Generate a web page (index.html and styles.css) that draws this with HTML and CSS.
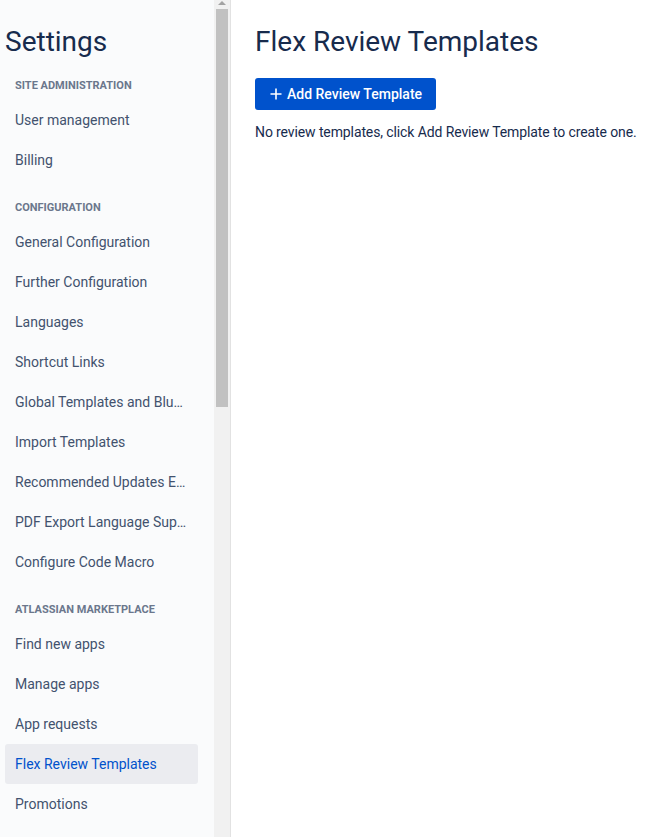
FILE: index.html
```html
<!DOCTYPE html>
<html lang="en">
<head>
<meta charset="utf-8">
<title>Flex Review Templates</title>
<link rel="stylesheet" href="styles.css">
</head>
<body>
<div class="layout">
  <aside class="sidebar">
    <nav class="nav">
      <h1 class="nav-title">Settings</h1>
      <div class="nav-heading">Site administration</div>
      <a class="nav-item">User management</a>
      <a class="nav-item">Billing</a>
      <div class="nav-heading">Configuration</div>
      <a class="nav-item">General Configuration</a>
      <a class="nav-item">Further Configuration</a>
      <a class="nav-item">Languages</a>
      <a class="nav-item">Shortcut Links</a>
      <a class="nav-item">Global Templates and Blueprints</a>
      <a class="nav-item">Import Templates</a>
      <a class="nav-item">Recommended Updates Email</a>
      <a class="nav-item">PDF Export Language Support</a>
      <a class="nav-item">Configure Code Macro</a>
      <div class="nav-heading">Atlassian Marketplace</div>
      <a class="nav-item">Find new apps</a>
      <a class="nav-item">Manage apps</a>
      <a class="nav-item">App requests</a>
      <a class="nav-item active">Flex Review Templates</a>
      <a class="nav-item">Promotions</a>
    </nav>
    <div class="scrollbar">
      <div class="scroll-arrow"></div>
      <div class="scroll-thumb"></div>
    </div>
  </aside>
  <main class="main">
    <h2 class="page-title">Flex Review Templates</h2>
    <button class="btn-primary" type="button">
      <svg class="btn-icon" width="12" height="12" viewBox="0 0 12 12" aria-hidden="true">
        <path d="M6 0.5v11M0.5 6h11" stroke="#fff" stroke-width="1.6" fill="none"/>
      </svg>
      <span>Add Review Template</span>
    </button>
    <p class="empty">No review templates, click Add Review Template to create one.</p>
  </main>
</div>
</body>
</html>
```
FILE: styles.css
```css
* { box-sizing: border-box; }
html, body { margin: 0; padding: 0; height: 100%; }
body {
  font-family: Roboto, "Liberation Sans", sans-serif;
  background: #fff;
  color: #172b4d;
  overflow: hidden;
}
.layout {
  display: flex;
  height: 837px;
}
.sidebar {
  width: 231px;
  flex: none;
  display: flex;
  background: #fafbfc;
  border-right: 1px solid #e2e2e2;
  overflow: hidden;
}
.nav {
  width: 214px;
  flex: none;
  padding: 26px 16px 0 5px;
  display: flex;
  flex-direction: column;
}
.nav-title {
  margin: 0;
  font-size: 28px;
  line-height: 32px;
  font-weight: 400;
  color: #172b4d;
}
.nav-heading {
  margin: 20px 0 6px;
  padding-left: 10px;
  font-size: 11px;
  line-height: 16px;
  font-weight: 700;
  text-transform: uppercase;
  color: #6b778c;
}
.nav-item {
  display: block;
  height: 40px;
  line-height: 40px;
  padding: 0 10px;
  font-size: 14px;
  color: #42526e;
  border-radius: 3px;
  white-space: nowrap;
  overflow: hidden;
  text-overflow: ellipsis;
  flex: none;
}
.nav-item.active {
  background: #ebecf0;
  color: #0052cc;
}
.scrollbar {
  width: 16px;
  flex: none;
  background: #f1f1f1;
  display: flex;
  flex-direction: column;
  align-items: center;
}
.scroll-arrow {
  width: 0;
  height: 0;
  border-left: 4px solid transparent;
  border-right: 4px solid transparent;
  border-bottom: 4px solid #a3a3a3;
  margin-top: 1px;
}
.scroll-thumb {
  width: 12px;
  height: 398px;
  margin-top: 4px;
  background: #c1c1c1;
}
.main {
  flex: 1;
  padding: 26px 0 0 24px;
}
.page-title {
  margin: 0;
  font-size: 28px;
  line-height: 32px;
  font-weight: 400;
  color: #172b4d;
}
.btn-primary {
  margin-top: 20px;
  height: 32px;
  display: inline-flex;
  align-items: center;
  gap: 5px;
  padding: 0 14px 0 15px;
  border: 0;
  border-radius: 3px;
  background: #0052cc;
  color: #fff;
  font-family: inherit;
  font-size: 14px;
  font-weight: 500;
}
.empty {
  margin: 12px 0 0;
  font-size: 14px;
  line-height: 20px;
  letter-spacing: -0.11px;
  color: #172b4d;
}
```
